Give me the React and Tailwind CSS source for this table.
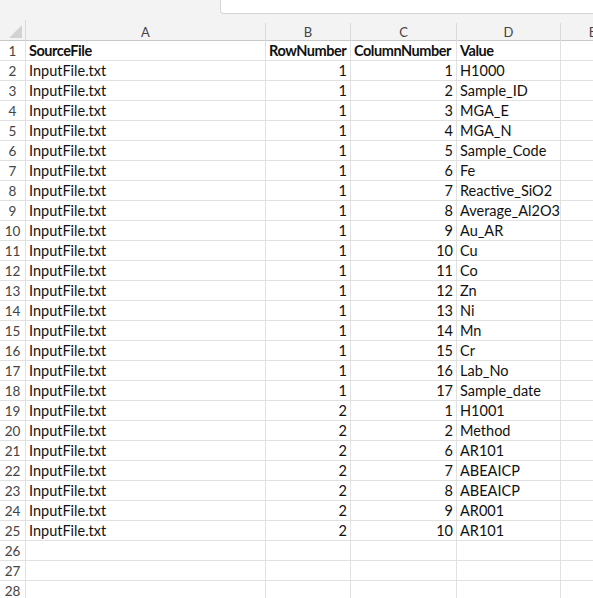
const rows = [
  [1, 1, "H1000"],
  [1, 2, "Sample_ID"],
  [1, 3, "MGA_E"],
  [1, 4, "MGA_N"],
  [1, 5, "Sample_Code"],
  [1, 6, "Fe"],
  [1, 7, "Reactive_SiO2"],
  [1, 8, "Average_Al2O3"],
  [1, 9, "Au_AR"],
  [1, 10, "Cu"],
  [1, 11, "Co"],
  [1, 12, "Zn"],
  [1, 13, "Ni"],
  [1, 14, "Mn"],
  [1, 15, "Cr"],
  [1, 16, "Lab_No"],
  [1, 17, "Sample_date"],
  [2, 1, "H1001"],
  [2, 2, "Method"],
  [2, 6, "AR101"],
  [2, 7, "ABEAICP"],
  [2, 8, "ABEAICP"],
  [2, 9, "AR001"],
  [2, 10, "AR101"],
];

const cols = "grid grid-cols-[26px_240px_85px_106px_104px_64px]";
const cell = "h-[20px] border-r border-b border-[#e1e1e1] px-[3px] leading-[20px] whitespace-nowrap overflow-hidden";
const bold = "font-bold tracking-[-0.45px]";

const Row = ({ n, children }) => (
  <div className={cols}>
    <div className="h-[20px] border-r border-b border-[#e1e1e1] text-center text-[13.5px] leading-[20px] text-[#444]">
      {n}
    </div>
    {children}
  </div>
);

export default function App() {
  return (
    <div
      className="w-[593px] h-[598px] overflow-hidden bg-white text-[#111] text-[14.5px]"
      style={{ fontFamily: "Lato, 'Noto Sans', sans-serif" }}
    >
      <div className="h-[20px] bg-[#f3f3f3] flex">
        <div className="ml-[220px] flex-1 h-[14px] bg-white border-l border-b border-[#d6d6d6] rounded-bl-[4px]" />
      </div>

      <div className={`${cols} bg-[#f3f3f3] h-[21px] border-b border-[#c8c8c8]`}>
        <div className="relative border-r border-[#dadada]">
          <svg className="absolute left-[9px] top-[5px]" width="13" height="13" viewBox="0 0 13 13">
            <polygon points="13,0 13,13 0,13" fill="#d2d2d2" />
          </svg>
        </div>
        {["A", "B", "C", "D", "E"].map((c) => (
          <div
            key={c}
            className="mt-[3px] border-r border-[#dadada] text-center text-[13px] leading-[18px] text-[#444]"
          >
            {c}
          </div>
        ))}
      </div>

      <Row n={1}>
        <div className={`${cell} ${bold}`}>SourceFile</div>
        <div className={`${cell} ${bold}`}>RowNumber</div>
        <div className={`${cell} ${bold}`}>ColumnNumber</div>
        <div className={`${cell} ${bold}`}>Value</div>
        <div className={cell} />
      </Row>

      {rows.map(([r, c, v], i) => (
        <Row key={i} n={i + 2}>
          <div className={cell}>InputFile.txt</div>
          <div className={`${cell} text-right`}>{r}</div>
          <div className={`${cell} text-right`}>{c}</div>
          <div className={cell}>{v}</div>
          <div className={cell} />
        </Row>
      ))}

      {[26, 27, 28].map((n) => (
        <Row key={n} n={n}>
          <div className={cell} />
          <div className={cell} />
          <div className={cell} />
          <div className={cell} />
          <div className={cell} />
        </Row>
      ))}
    </div>
  );
}
